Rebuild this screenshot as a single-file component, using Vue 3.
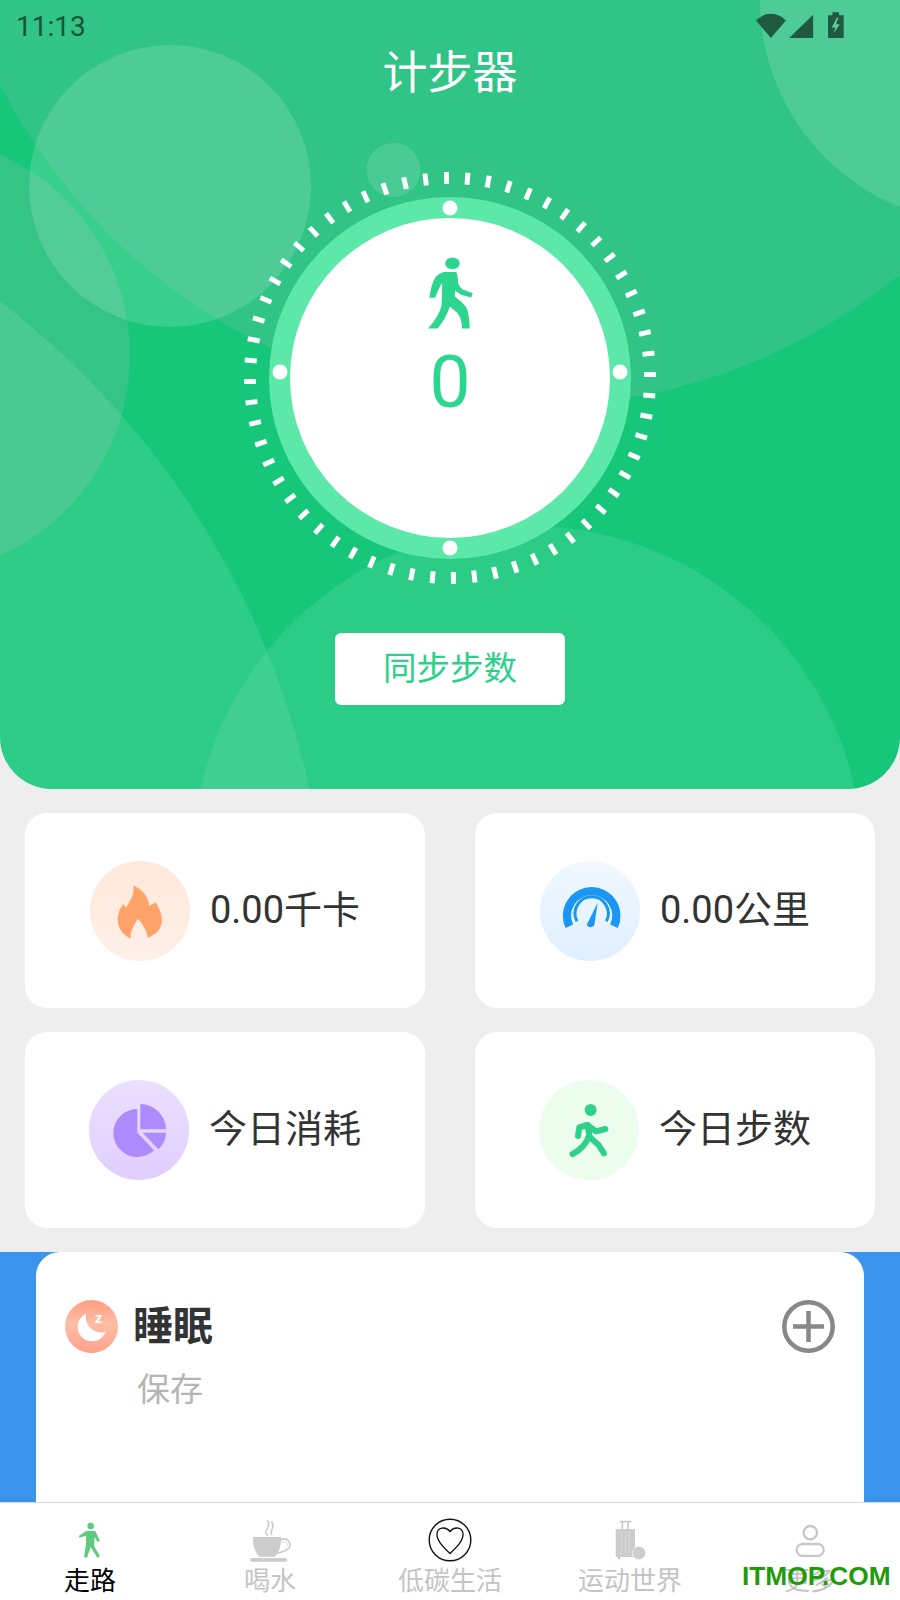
<template>
  <div class="page">
    <section class="hero">
      <svg class="hero-bg" width="900" height="789" viewBox="0 0 900 789">
        <circle cx="527" cy="-185" r="592" fill="rgba(120,190,165,.27)" />
        <circle cx="-90" cy="355" r="220" fill="rgba(140,190,170,.26)" />
        <circle cx="-505" cy="964" r="833" fill="rgba(255,255,255,.1)" />
        <circle cx="528" cy="861" r="335" fill="rgba(255,255,255,.09)" />
        <circle cx="170" cy="186" r="141" fill="rgba(255,255,255,.15)" />
        <circle cx="393.5" cy="170" r="27" fill="rgba(255,255,255,.13)" />
        <circle cx="983" cy="0" r="223" fill="rgba(255,255,255,.14)" />
      </svg>

      <div class="status">
        <span class="clock">11:13</span>
        <svg width="88" height="27" viewBox="48 30 265 80" fill="#1f5a40">
          <path d="M48 55 C75 28 111 28 138 55 L93 108 Z" />
          <path d="M220 38 V108 H148 Z" />
          <path d="M278 30 H298 V39 H312 V108 H265 V39 H278 Z" />
          <path d="M292 46 L276 76 H287 L282 94 L300 66 H289 L296 46 Z" fill="#5ccf9c" />
        </svg>
      </div>

      <h1 class="title">计步器</h1>

      <div class="dial">
        <svg width="412" height="412" viewBox="0 0 412 412">
          <rect
            v-for="a in tickAngles"
            :key="a"
            x="203.5"
            y="0"
            width="5"
            height="12"
            fill="#fff"
            :transform="`rotate(${a} 206 206)`"
          />
          <circle cx="206" cy="206" r="181" fill="#5ce8a9" />
          <circle cx="206" cy="206" r="160" fill="#fff" />
          <circle cx="206" cy="36" r="7.5" fill="#fff" />
          <circle cx="206" cy="376" r="7.5" fill="#fff" />
          <circle cx="36" cy="200" r="7.5" fill="#fff" />
          <circle cx="376" cy="200" r="7.5" fill="#fff" />
        </svg>
        <div class="dial-inner">
          <svg width="45" height="72" viewBox="593 321 136 217" fill="#2dd68e">
            <ellipse cx="667" cy="340" rx="22" ry="18" />
            <path d="M640 366 L677 366 Q683 369 684 400 Q689 414 698 419 L728 430 L724 443 L692 435 L675 422 L674 440 Q696 456 708 472 Q718 490 719 537 L696 537 Q695 506 682 490 L659 470 Q648 505 622 537 L593 537 Q626 500 634 468 L636 400 Q626 412 615 444 L597 444 Q603 400 617 380 Q627 370 640 366 Z" />
          </svg>
          <div class="steps">0</div>
        </div>
      </div>

      <button class="sync">同步步数</button>
    </section>

    <section class="grid">
      <div class="card">
        <svg class="badge" viewBox="30 30 300 300">
          <defs>
            <linearGradient id="fireBg" x1="0" y1="0" x2="0" y2="1">
              <stop offset="0" stop-color="#ffe8da" />
              <stop offset="1" stop-color="#fff0e8" />
            </linearGradient>
          </defs>
          <circle cx="180" cy="180" r="150" fill="url(#fireBg)" />
          <path d="M160 103 C185 115 205 135 208 165 C215 160 222 158 226 154 C240 175 248 195 245 215 C242 238 225 252 203 260 C200 235 185 215 173 203 C165 220 150 235 152 262 C130 255 113 232 113 205 C113 185 122 170 130 158 L138 170 C150 150 165 130 160 103 Z" fill="#ffa36b" />
        </svg>
        <span>0.00千卡</span>
      </div>
      <div class="card">
        <svg class="badge" viewBox="30 30 300 300">
          <defs>
            <linearGradient id="gaugeBg" x1="0" y1="0" x2="0" y2="1">
              <stop offset="0" stop-color="#f1f8fe" />
              <stop offset="1" stop-color="#dfefff" />
            </linearGradient>
          </defs>
          <circle cx="180" cy="180" r="150" fill="url(#gaugeBg)" />
          <g fill="none" stroke="#1a96f5">
            <path d="M118 226 A 74 74 0 1 1 252 226" stroke-width="25" />
            <path d="M141 211 A 50 50 0 1 1 229 211" stroke-width="9" />
          </g>
          <path d="M203 155 L193 222 Q182 236 170 222 Z" fill="#1a96f5" />
        </svg>
        <span>0.00公里</span>
      </div>
      <div class="card">
        <svg class="badge" viewBox="27 30 300 300">
          <defs>
            <linearGradient id="pieBg" x1="0" y1="0" x2="0" y2="1">
              <stop offset="0" stop-color="#ebe0ff" />
              <stop offset="1" stop-color="#e0ceff" />
            </linearGradient>
          </defs>
          <circle cx="177" cy="180" r="150" fill="url(#pieBg)" />
          <g fill="#ae8aff">
            <path d="M172 117 A 72 72 0 1 0 222 241 L172 188 Z" />
            <path d="M181 102 A 77 77 0 0 1 258 178 L181 178 Z" />
            <path d="M188 188 L258 188 A 70 70 0 0 1 235 238 Z" />
          </g>
        </svg>
        <span>今日消耗</span>
      </div>
      <div class="card">
        <svg class="badge" viewBox="27 30 300 300">
          <circle cx="177" cy="180" r="150" fill="#ecfdee" />
          <circle cx="182" cy="120" r="18" fill="#2ed08a" />
          <g fill="none" stroke="#2ed08a" stroke-width="18" stroke-linecap="round" stroke-linejoin="round">
            <path d="M144 198 L148 172 L172 165 L198 184 L226 177" />
            <path d="M172 165 L180 202 L205 224 L222 250" />
            <path d="M176 200 Q165 232 128 252" />
          </g>
        </svg>
        <span>今日步数</span>
      </div>
    </section>

    <section class="band">
      <div class="sleep">
        <div class="sleep-head">
          <svg width="53" height="53" viewBox="45 30 158 158">
            <defs>
              <linearGradient id="moonBg" x1="0" y1="0" x2="0" y2="1">
                <stop offset="0" stop-color="#ff9e80" />
                <stop offset=".45" stop-color="#ffbda6" />
                <stop offset="1" stop-color="#ffa28a" />
              </linearGradient>
            </defs>
            <circle cx="124" cy="109" r="79" fill="url(#moonBg)" />
            <path d="M108 71 A 43 43 0 1 0 166 125 A 46 46 0 0 1 108 71 Z" fill="#fff" />
            <text x="134" y="98" class="zzz">z</text>
          </svg>
          <span class="sleep-title">睡眠</span>
          <svg class="plus" width="53" height="53" viewBox="0 0 53 53" fill="none" stroke="#888" stroke-width="4.5">
            <circle cx="26.5" cy="26.5" r="24.2" />
            <path d="M11 26.5 H42 M26.5 11 V42" />
          </svg>
        </div>
        <div class="sleep-sub">保存</div>
      </div>
    </section>

    <nav class="tabs">
      <div class="tab active">
        <div class="tab-icon">
          <svg width="24" height="38" viewBox="230 60 72 114">
            <circle cx="268" cy="75" r="10" fill="#5ecb7f" />
            <path d="M254 90 L282 90 L296 120 L288 122 L280 108 L278 135 L296 166 L288 170 L268 138 L257 170 L248 168 L254 128 L254 104 L234 110 L233 104 Z" fill="#5ecb7f" />
          </svg>
        </div>
        <span>走路</span>
      </div>
      <div class="tab">
        <div class="tab-icon">
          <svg width="42" height="44" viewBox="747 52 126 134">
            <g fill="none" stroke="#ccc" stroke-width="5">
              <path d="M803 106 C785 88 818 82 802 58" />
              <path d="M816 104 C805 90 830 80 814 62" />
              <path d="M842 118 C870 108 880 140 862 148 C852 155 842 156 832 160" />
              <path d="M846 126 C862 120 868 134 858 142" stroke-width="2" />
            </g>
            <path d="M758 110 H844 C844 140 838 156 824 170 H778 C764 156 758 140 758 110 Z" fill="#ccc" />
            <rect x="749" y="174" width="113" height="11" rx="5" fill="#ccc" />
          </svg>
        </div>
        <span>喝水</span>
      </div>
      <div class="tab">
        <div class="tab-icon">
          <svg width="44" height="44" viewBox="0 0 44 44" fill="none" stroke="#111">
            <circle cx="22" cy="22" r="20.8" stroke-width="1.4" />
            <path d="M22 35.5 C14 28 8.5 22 9 15.5 C9.5 10 17 7.5 22 13.5 C27 7.5 34.5 10 35 15.5 C35.5 22 30 28 22 35.5 Z" stroke-width="1.3" />
          </svg>
        </div>
        <span>低碳生活</span>
      </div>
      <div class="tab">
        <div class="tab-icon">
          <svg width="31" height="40" viewBox="493 58 93 120">
            <path d="M506 63 H542 M515 63 V86 M532 63 V86" fill="none" stroke="#ccc" stroke-width="5" />
            <rect x="495" y="85" width="58" height="84" rx="3" fill="#ccc" />
            <path d="M512 90 V164 M524 90 V164 M536 90 V164" stroke="#e2e2e2" stroke-width="2" />
            <rect x="502" y="168" width="6" height="8" fill="#e8c080" />
            <circle cx="565" cy="157" r="20" fill="#ccc" stroke="#fff" stroke-width="2" />
          </svg>
        </div>
        <span>运动世界</span>
      </div>
      <div class="tab">
        <div class="tab-icon">
          <svg width="30" height="34" viewBox="1036 68 90 102" fill="none" stroke="#c8c8c8" stroke-width="7">
            <circle cx="1082" cy="97" r="20" />
            <rect x="1041" y="131" width="81" height="36" rx="18" />
          </svg>
        </div>
        <span>更多</span>
      </div>
    </nav>

    <div class="watermark">ITMOP.COM</div>
  </div>
</template>

<script setup>
// 60 ticks round the dial, slightly turned like in the artwork
const tickAngles = Array.from({ length: 60 }, (_, i) => i * 6 - 1)
</script>

<style scoped>
.page {
  position: relative;
  width: 900px;
  height: 1600px;
  overflow: hidden;
  display: flex;
  flex-direction: column;
  background: #eee;
  font-family: Roboto, "Noto Sans CJK SC", sans-serif;
}

.hero {
  position: relative;
  height: 789px;
  flex: none;
  display: flex;
  flex-direction: column;
  align-items: center;
  overflow: hidden;
  background: #16c77a;
  border-radius: 0 0 52px 52px;
}

.hero-bg {
  position: absolute;
  left: 0;
  top: 0;
}

.status {
  position: relative;
  width: 100%;
  height: 50px;
  box-sizing: border-box;
  padding: 0 56px 0 16px;
  display: flex;
  align-items: center;
  justify-content: space-between;
}

.clock {
  margin-top: 2px;
  font-size: 28px;
  color: #1c5439;
}

.title {
  position: relative;
  margin: 2px 0 -2px;
  font-size: 45px;
  line-height: 44px;
  font-weight: 400;
  color: #fff;
}

.dial {
  position: relative;
  width: 412px;
  height: 412px;
  margin-top: 78px;
}

.dial > svg {
  display: block;
}

.dial-inner {
  position: absolute;
  left: 0;
  top: 0;
  right: 0;
  padding-top: 85px;
  display: flex;
  flex-direction: column;
  align-items: center;
}

.steps {
  margin-top: 13px;
  font-size: 73px;
  line-height: 80px;
  color: #2dd68e;
}

.sync {
  position: relative;
  width: 230px;
  height: 72px;
  margin-top: 49px;
  padding: 0 0 8px;
  border: 0;
  border-radius: 6px;
  background: #fff;
  color: #2bd08b;
  font-family: inherit;
  font-size: 33.5px;
}

.grid {
  flex: none;
  display: grid;
  grid-template-columns: 400px 400px;
  grid-template-rows: 195px 196px;
  gap: 24px 50px;
  padding: 24px 25px;
}

.card {
  display: flex;
  align-items: center;
  justify-content: center;
  gap: 20px;
  background: #fff;
  border-radius: 22px;
  color: #333;
  font-size: 38px;
}

.card span {
  margin-bottom: 9px;
}

.badge {
  width: 100px;
  height: 100px;
  flex: none;
}

.band {
  flex: 1;
  min-height: 0;
  padding: 0 36px;
  background: #3a94ec;
}

.sleep {
  height: 100%;
  box-sizing: border-box;
  padding: 48px 29px 0;
  background: #fff;
  border-radius: 24px 24px 0 0;
}

.sleep-head {
  display: flex;
  align-items: center;
}

.sleep-title {
  margin-left: 15px;
  font-size: 40px;
  font-weight: 700;
  line-height: 53px;
  color: #333;
}

.plus {
  margin-left: auto;
}

.zzz {
  font-family: "Liberation Sans", sans-serif;
  font-size: 46px;
  font-weight: 700;
  fill: #fff;
}

.sleep-sub {
  margin: 17px 0 0 72px;
  font-size: 33px;
  line-height: 40px;
  color: #b5b5b5;
}

.tabs {
  flex: none;
  height: 97px;
  display: flex;
  background: #fff;
  border-top: 1px solid #d8d8d8;
}

.tab {
  flex: 1;
  padding-top: 13px;
  display: flex;
  flex-direction: column;
  align-items: center;
  font-size: 26px;
  line-height: 34px;
  color: #c4c4c4;
}

.tab.active {
  color: #000;
}

.tab-icon {
  height: 48px;
  display: flex;
  align-items: center;
  justify-content: center;
}

.watermark {
  position: absolute;
  left: 742px;
  top: 1561px;
  font-family: "Liberation Sans", sans-serif;
  font-size: 26.3px;
  line-height: 30px;
  font-weight: 700;
  color: #1f9b0c;
}
</style>
